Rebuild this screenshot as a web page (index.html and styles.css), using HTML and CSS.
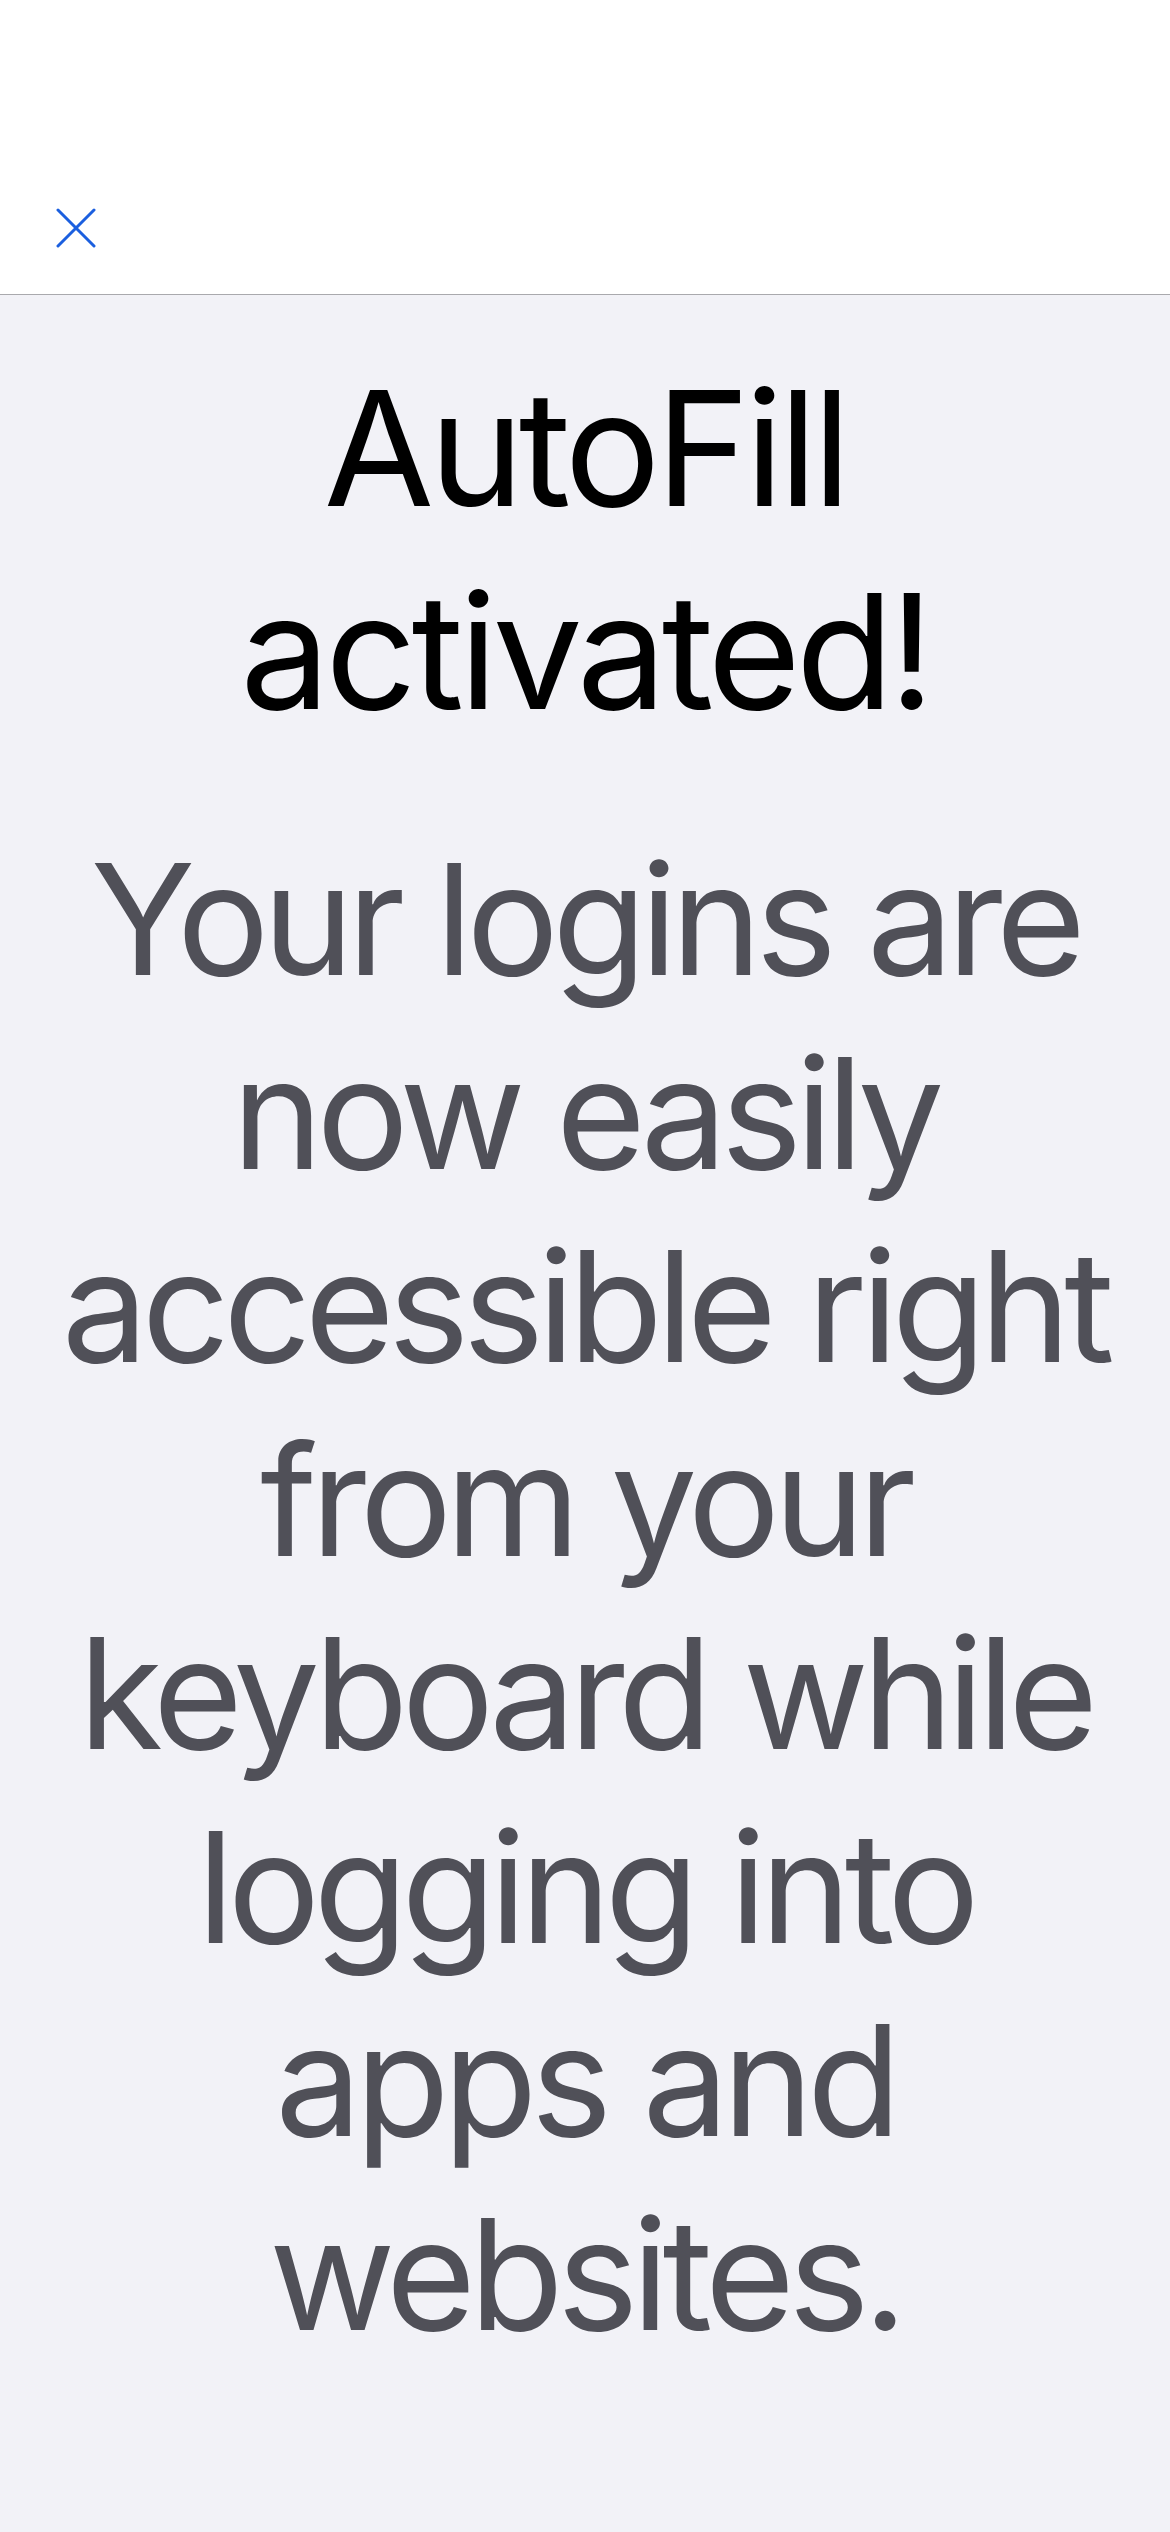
FILE: index.html
```html
<!DOCTYPE html>
<html lang="en">
<head>
<meta charset="utf-8">
<title>AutoFill activated!</title>
<link rel="stylesheet" href="styles.css">
</head>
<body>
<div class="screen">
  <header class="navbar">
    <button class="close-btn" aria-label="Close">
      <svg viewBox="0 0 40 40" width="40" height="40">
        <path d="M2 2 L38 38 M38 2 L2 38" fill="none" stroke="#1b5fdf" stroke-width="3" stroke-linecap="round"/>
      </svg>
    </button>
  </header>
  <main class="content">
    <h1 class="title">AutoFill<br>activated!</h1>
    <p class="message">Your logins are<br>now easily<br>accessible right<br>from your<br>keyboard while<br>logging into<br>apps and<br>websites.</p>
  </main>
</div>
</body>
</html>
```
FILE: styles.css
```css
html, body {
  margin: 0;
  padding: 0;
  background: #f2f2f7;
}
body {
  font-family: "Inter", "Noto Sans", sans-serif;
}
.screen {
  width: 1170px;
  min-height: 2532px;
  display: flex;
  flex-direction: column;
  background: #f2f2f7;
}
.navbar {
  box-sizing: border-box;
  height: 295px;
  background: #ffffff;
  border-bottom: 1px solid #a9a9ad;
  display: flex;
  align-items: flex-end;
  padding: 0 0 46px 56px;
}
.close-btn {
  border: 0;
  background: none;
  padding: 0;
  margin: 0;
  width: 40px;
  height: 40px;
  display: block;
}
.close-btn svg {
  display: block;
}
.content {
  flex: 1;
  display: flex;
  flex-direction: column;
  align-items: center;
  text-align: center;
}
.title {
  margin: 52px 0 0;
  font-size: 160px;
  line-height: 203px;
  font-weight: 400;
  color: #000000;
  letter-spacing: -5px;
}
.message {
  margin: 70px 0 0;
  font-size: 154px;
  line-height: 193.5px;
  font-weight: 400;
  color: #505058;
  letter-spacing: -6.5px;
}
```
